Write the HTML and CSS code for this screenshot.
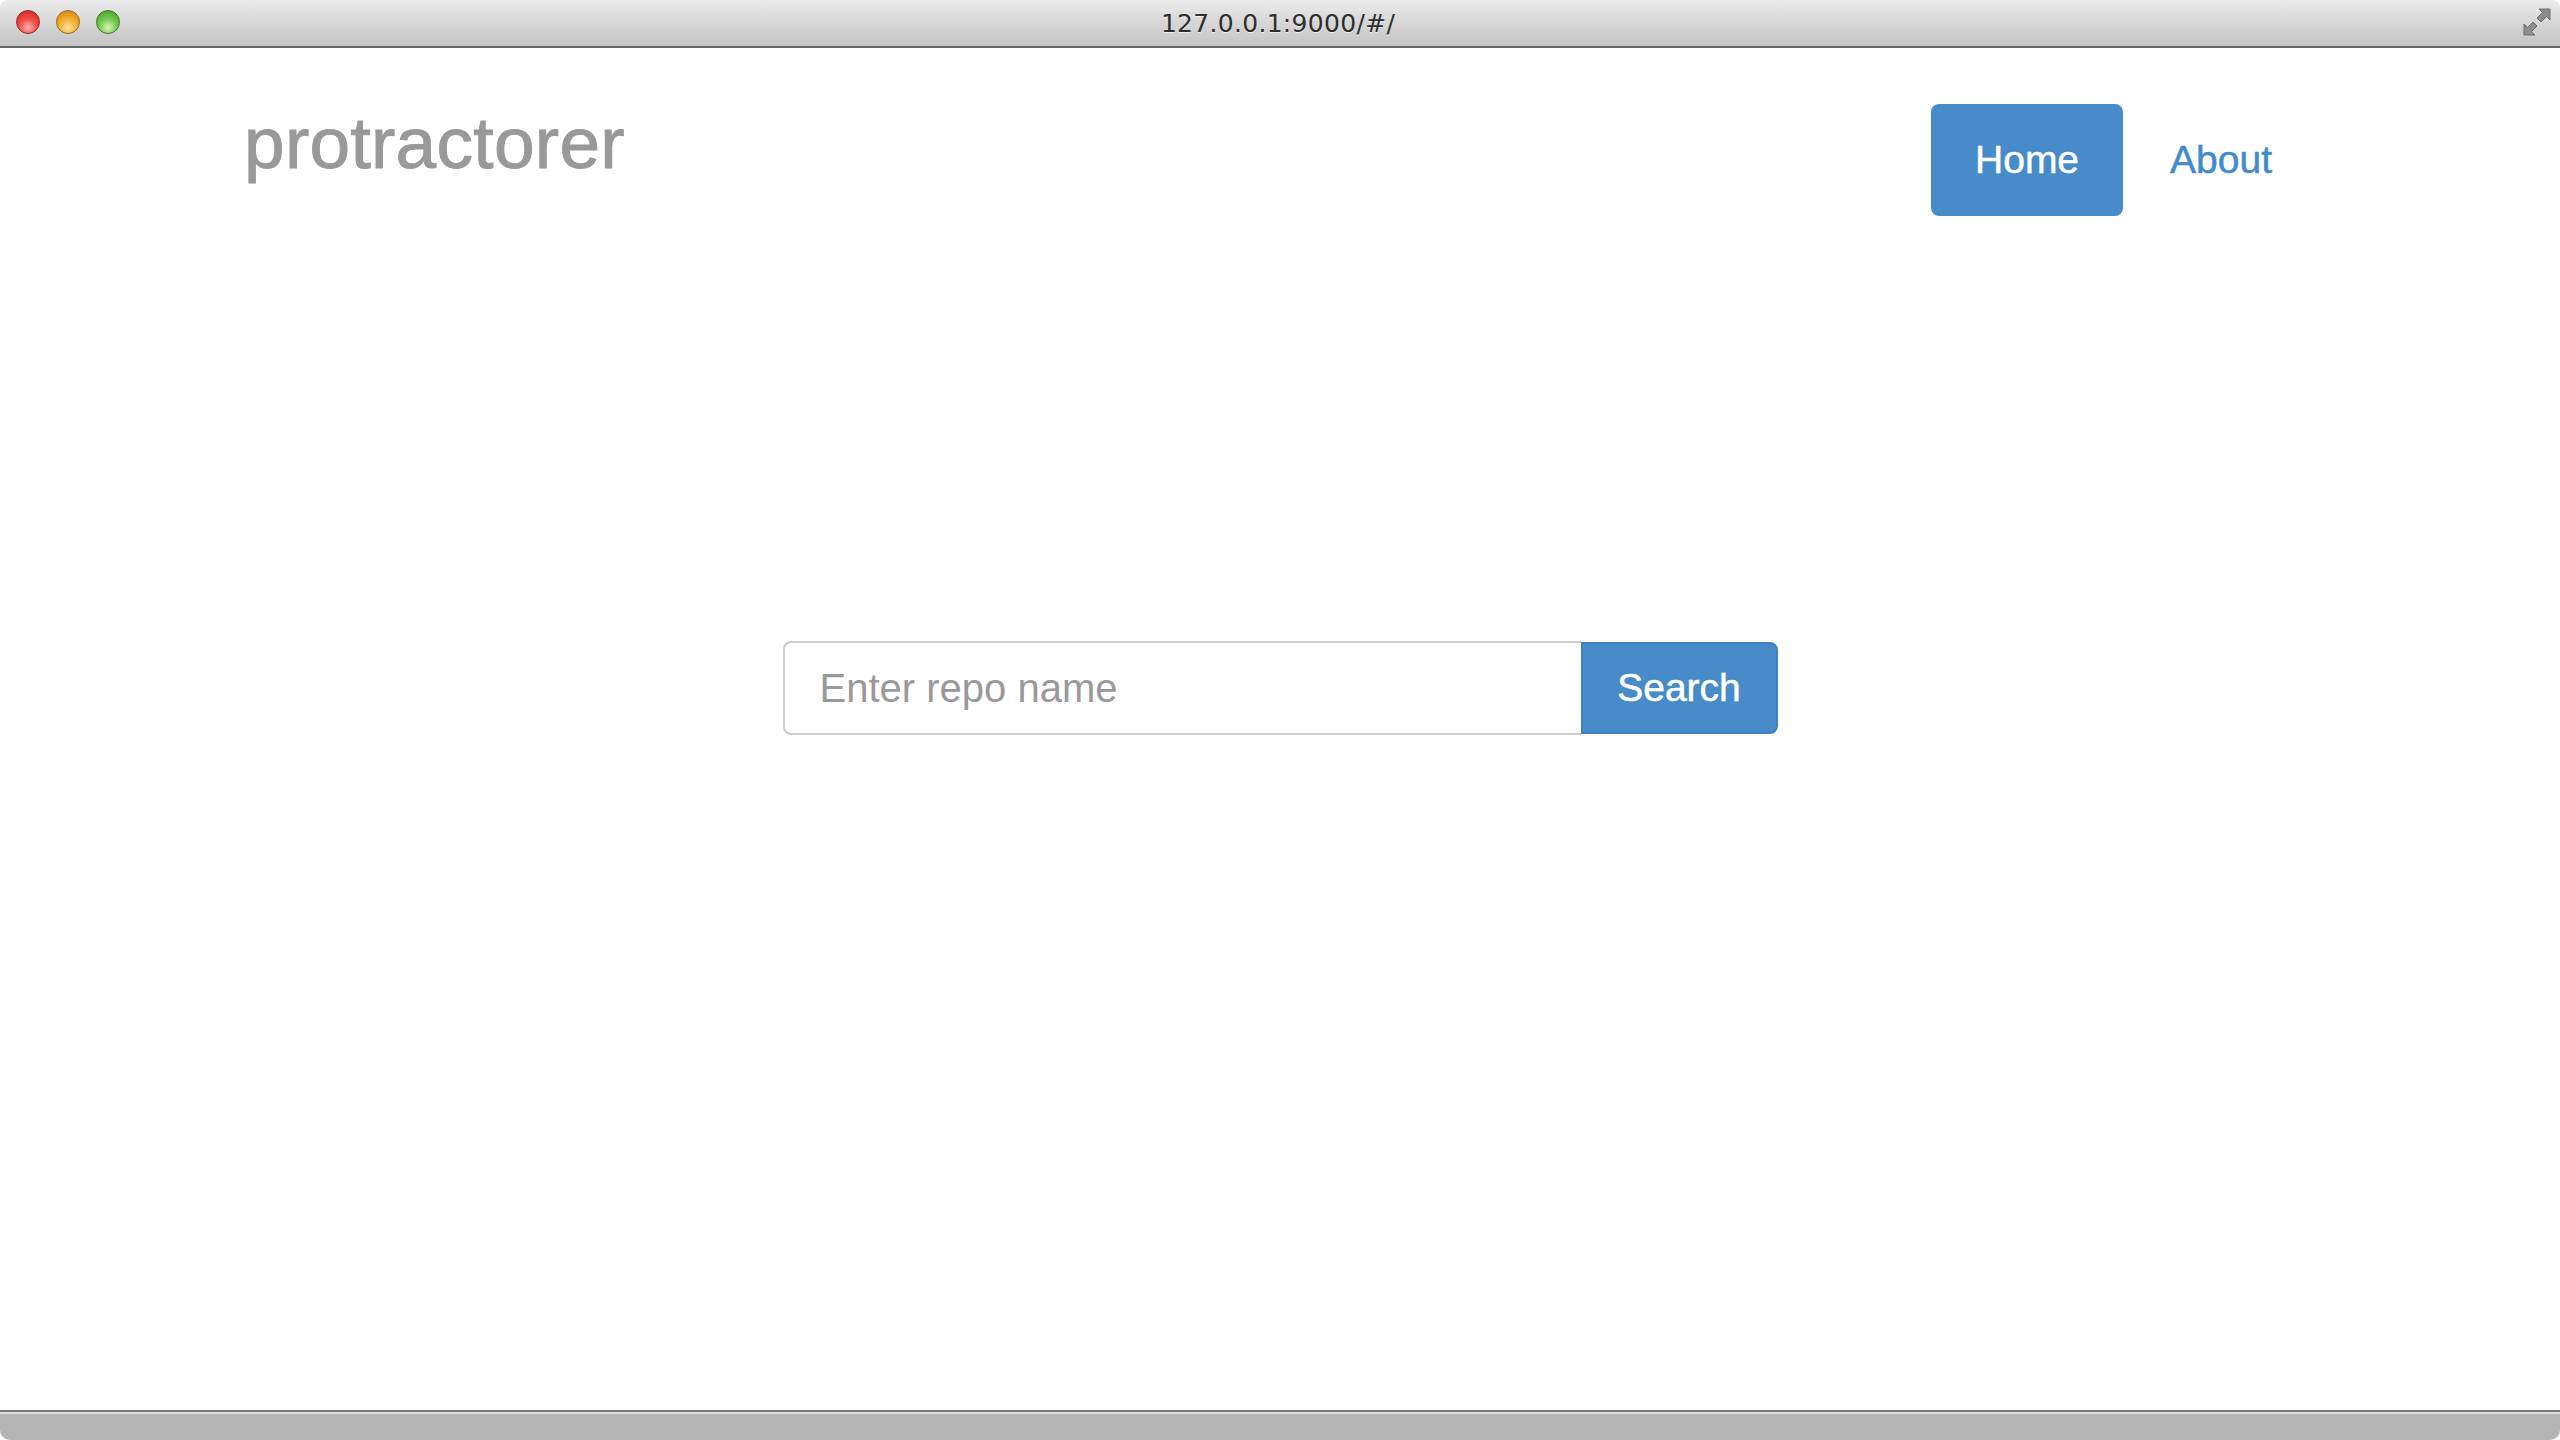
FILE: index.html
```html
<!DOCTYPE html>
<html>
<head>
<meta charset="utf-8">
<title>protractorer</title>
<link rel="stylesheet" href="styles.css">
</head>
<body>
<div class="window">
  <div class="titlebar">
    <div class="lights">
      <span class="light red"></span>
      <span class="light yellow"></span>
      <span class="light green"></span>
    </div>
    <div class="url">127.0.0.1:9000/#/</div>
    <svg class="fullscreen" width="30" height="30" viewBox="0 0 30 30">
      <g fill="#8c8c8c" stroke="#6f6f6f" stroke-width="1" stroke-linejoin="round">
        <polygon points="17,2 28,2 28,13 24.5,9.5 19,15 15,11 20.5,5.5"/>
        <polygon points="13,28 2,28 2,17 5.5,20.5 11,15 15,19 9.5,24.5"/>
      </g>
    </svg>
  </div>
  <div class="content">
    <div class="header">
      <div class="brand">protractorer</div>
      <ul class="nav">
        <li class="pill active">Home</li>
        <li class="pill">About</li>
      </ul>
    </div>
    <div class="search">
      <input class="repo" type="text" placeholder="Enter repo name">
      <button class="btn">Search</button>
    </div>
  </div>
  <div class="statusbar"></div>
</div>
</body>
</html>
```
FILE: styles.css
```css
html, body {
  margin: 0;
  padding: 0;
  background: #ffffff;
}
.window {
  width: 2560px;
  height: 1440px;
  display: flex;
  flex-direction: column;
  font-family: "Liberation Sans", Arial, sans-serif;
  overflow: hidden;
}
.titlebar {
  position: relative;
  height: 46px;
  flex: none;
  background: linear-gradient(#ececec, #d6d6d6 50%, #c4c4c4);
  border-bottom: 2px solid #666666;
  border-radius: 8px 8px 0 0;
  display: flex;
  align-items: center;
  justify-content: center;
}
.lights {
  position: absolute;
  left: 16px;
  top: 10px;
  display: flex;
  gap: 16px;
}
.light {
  width: 22px;
  height: 22px;
  border-radius: 50%;
  display: block;
}
.red {
  background: radial-gradient(circle at 50% 75%, #ffb3ae 0%, #f04a44 45%, #c82620 100%);
  border: 1px solid #9a2a25;
}
.yellow {
  background: radial-gradient(circle at 50% 75%, #ffe3a0 0%, #f5ae2f 45%, #c97f12 100%);
  border: 1px solid #9c6a16;
}
.green {
  background: radial-gradient(circle at 50% 75%, #d4f5b5 0%, #74c94d 45%, #3f9a22 100%);
  border: 1px solid #3a7a22;
}
.url {
  font-family: "DejaVu Sans", sans-serif;
  font-size: 25px;
  color: #2e2e2e;
  text-shadow: 0 1px 0 rgba(255,255,255,0.6);
  letter-spacing: 0.3px;
  margin-left: -4px;
}
.fullscreen {
  position: absolute;
  right: 8px;
  top: 7px;
}
.content {
  flex: 1;
  display: flex;
  flex-direction: column;
  align-items: center;
}
.header {
  width: 2072px;
  padding-top: 56px;
  display: flex;
  justify-content: space-between;
  align-items: flex-start;
}
.brand {
  margin-top: 2px;
  font-size: 73px;
  line-height: 73px;
  color: #999999;
  letter-spacing: 0.3px;
  -webkit-text-stroke: 1px #999999;
}
.nav {
  list-style: none;
  margin: 0;
  padding: 0;
  display: flex;
  gap: 3px;
}
.pill {
  padding: 0 44px;
  line-height: 112px;
  font-size: 39px;
  color: #428bca;
  border-radius: 8px;
  -webkit-text-stroke: 0.5px currentColor;
}
.pill.active {
  background: #478cc9;
  color: #ffffff;
}
.search {
  margin-top: 425px;
  display: flex;
  align-items: center;
}
.repo {
  box-sizing: border-box;
  width: 798px;
  height: 94px;
  margin: 0;
  padding: 0 0 0 35px;
  border: 2px solid #cccccc;
  border-right: none;
  border-radius: 8px 0 0 8px;
  font-family: "Liberation Sans", Arial, sans-serif;
  font-size: 40px;
  color: #555555;
  outline: none;
}
.repo::placeholder {
  color: #999999;
}
.btn {
  box-sizing: border-box;
  width: 197px;
  height: 92px;
  margin: 0;
  padding: 0;
  background: #478cc9;
  border: 2px solid #3f81bf;
  border-radius: 0 8px 8px 0;
  color: #ffffff;
  font-family: "Liberation Sans", Arial, sans-serif;
  font-size: 39px;
  -webkit-text-stroke: 0.5px #ffffff;
}
.statusbar {
  flex: none;
  height: 28px;
  background: #b4b4b4;
  border-top: 2px solid #777777;
  box-shadow: inset 0 2px 0 #dddddd;
  border-radius: 0 0 10px 10px;
}
```
